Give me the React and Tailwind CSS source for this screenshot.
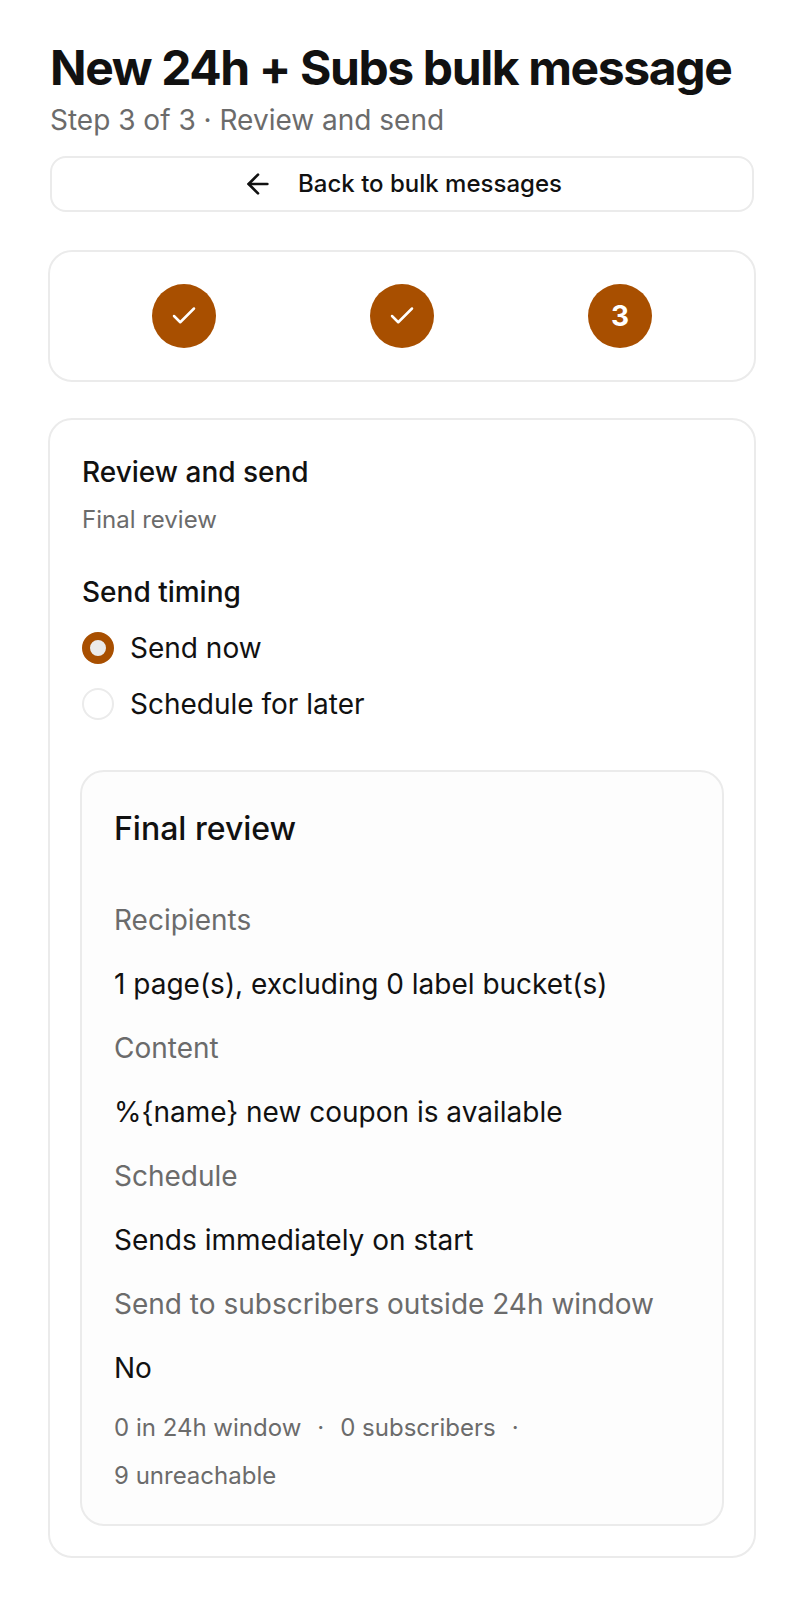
import { ArrowLeft, Check } from "lucide-react";

const Step = ({ children }) => (
  <div className="flex justify-center">
    <div className="w-16 h-16 rounded-full bg-[#a84f00] text-white flex items-center justify-center text-[28px] font-bold">
      {children}
    </div>
  </div>
);

const rows = [
  ["Recipients", "1 page(s), excluding 0 label bucket(s)"],
  ["Content", "%{name} new coupon is available"],
  ["Schedule", "Sends immediately on start"],
  ["Send to subscribers outside 24h window", "No"],
];

export default function App() {
  return (
    <div className="font-['Inter',sans-serif] bg-white text-[#111111] w-[804px] h-[1602px] px-[48px] pt-[40px]">
      <h1 className="text-[48px] leading-[56px] font-bold tracking-[-0.029em] pl-[2px]">New 24h + Subs bulk message</h1>
      <p className="text-[28px] leading-[36px] text-[#6b6b6b] mt-[6px] pl-[2px]">Step 3 of 3 · Review and send</p>
      <button className="mt-[18px] w-[704px] mx-[2px] h-[56px] rounded-2xl border-2 border-[#ebebeb] flex items-center justify-center gap-[24px] text-[24px] font-medium">
        <ArrowLeft size={32} />
        Back to bulk messages
      </button>
      <div className="mt-[38px] h-[132px] rounded-[24px] border-2 border-[#ebebeb] grid grid-cols-3 items-center px-[25px]">
        <Step><Check size={30} strokeWidth={2} /></Step>
        <Step><Check size={30} strokeWidth={2} /></Step>
        <Step>3</Step>
      </div>
      <div className="mt-[36px] rounded-[24px] border-2 border-[#ebebeb] px-[30px] pt-[34px] pb-[30px]">
        <div className="pl-[2px]">
          <div className="text-[28px] leading-[36px] font-medium">Review and send</div>
          <div className="text-[24px] leading-[32px] text-[#6b6b6b] mt-[14px]">Final review</div>
          <div className="text-[28px] leading-[36px] font-medium mt-[38px]">Send timing</div>
          <div className="flex items-center gap-[16px] mt-[18px] h-[40px]">
            <span className="w-8 h-8 rounded-full border-[8px] border-[#a84f00] bg-[#ebebeb]" />
            <span className="text-[28px]">Send now</span>
          </div>
          <div className="flex items-center gap-[16px] mt-[16px] h-[40px]">
            <span className="w-8 h-8 rounded-full border-2 border-[#ebebeb]" />
            <span className="text-[28px]">Schedule for later</span>
          </div>
        </div>
        <div className="mt-[46px] rounded-[24px] border-2 border-[#ebebeb] bg-[#fdfdfd] px-[32px] pt-[37px] pb-[24px]">
          <div className="text-[32px] leading-[40px] font-medium mb-[53px]">Final review</div>
          {rows.map(([label, value]) => (
            <div key={label}>
              <div className="text-[28px] leading-[36px] text-[#6b6b6b] mb-[28px]">{label}</div>
              <div className="text-[28px] leading-[36px] mb-[28px]">{value}</div>
            </div>
          ))}
          <div className="text-[24px] leading-[48px] text-[#6b6b6b] -mt-[10px]">
            <div className="flex gap-x-[16px]">
              <span>0 in 24h window</span>
              <span>·</span>
              <span>0 subscribers</span>
              <span>·</span>
            </div>
            <div>9 unreachable</div>
          </div>
        </div>
      </div>
    </div>
  );
}
